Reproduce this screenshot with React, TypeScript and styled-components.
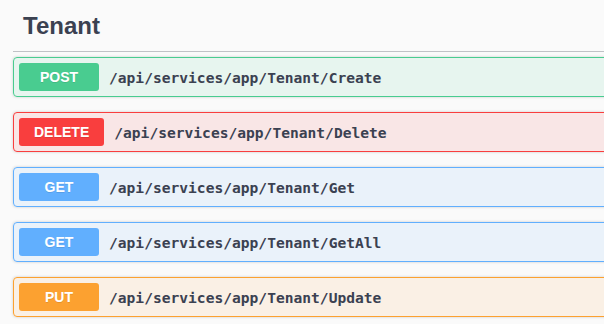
import React from 'react';
import styled, { createGlobalStyle } from 'styled-components';

const GlobalStyle = createGlobalStyle`
  html, body {
    margin: 0;
    padding: 0;
    background: #fafafa;
    overflow: hidden;
  }
`;

type Method = 'post' | 'delete' | 'get' | 'put';

const methodColors: Record<Method, string> = {
  post: '73, 204, 144',
  delete: '249, 62, 62',
  get: '97, 175, 254',
  put: '252, 161, 48',
};

const Viewport = styled.div`
  width: 100%;
  overflow: hidden;
`;

const Page = styled.div`
  width: 660px;
  padding: 1px 0 0 13px;
  font-family: 'Liberation Sans', Arial, sans-serif;
  color: #3b4151;
`;

const TagTitle = styled.h4`
  margin: 0 0 5px;
  padding: 10px 20px 10px 10px;
  font-size: 24px;
  line-height: 30px;
  font-weight: 700;
  color: #3b4151;
  border-bottom: 1px solid rgba(59, 65, 81, 0.3);
`;

const OpBlock = styled.div<{ $method: Method }>`
  margin: 0 0 15px;
  border: 1px solid rgb(${p => methodColors[p.$method]});
  border-radius: 4px;
  background: rgba(${p => methodColors[p.$method]}, 0.1);
  box-shadow: 0 0 3px rgba(0, 0, 0, 0.19);
`;

const Summary = styled.div`
  display: flex;
  align-items: center;
  padding: 5px;
`;

const MethodBadge = styled.span<{ $method: Method }>`
  min-width: 80px;
  box-sizing: border-box;
  padding: 6px 15px;
  border-radius: 3px;
  background: rgb(${p => methodColors[p.$method]});
  color: #fff;
  font-family: 'Liberation Sans', Arial, sans-serif;
  font-size: 14px;
  line-height: 16px;
  font-weight: 700;
  text-align: center;
  text-shadow: 0 1px 0 rgba(0, 0, 0, 0.1);
`;

const Path = styled.span`
  padding: 0 10px;
  font-family: 'DejaVu Sans Mono', monospace;
  font-size: 14.6px;
  font-weight: 700;
  color: #3b4151;
`;

const operations: { method: Method; path: string }[] = [
  { method: 'post', path: '/api/services/app/Tenant/Create' },
  { method: 'delete', path: '/api/services/app/Tenant/Delete' },
  { method: 'get', path: '/api/services/app/Tenant/Get' },
  { method: 'get', path: '/api/services/app/Tenant/GetAll' },
  { method: 'put', path: '/api/services/app/Tenant/Update' },
];

const App: React.FC = () => (
  <>
    <GlobalStyle />
    <Viewport>
      <Page>
        <TagTitle>Tenant</TagTitle>
        {operations.map(op => (
          <OpBlock key={op.path} $method={op.method}>
            <Summary>
              <MethodBadge $method={op.method}>{op.method.toUpperCase()}</MethodBadge>
              <Path>{op.path}</Path>
            </Summary>
          </OpBlock>
        ))}
      </Page>
    </Viewport>
  </>
);

export default App;
